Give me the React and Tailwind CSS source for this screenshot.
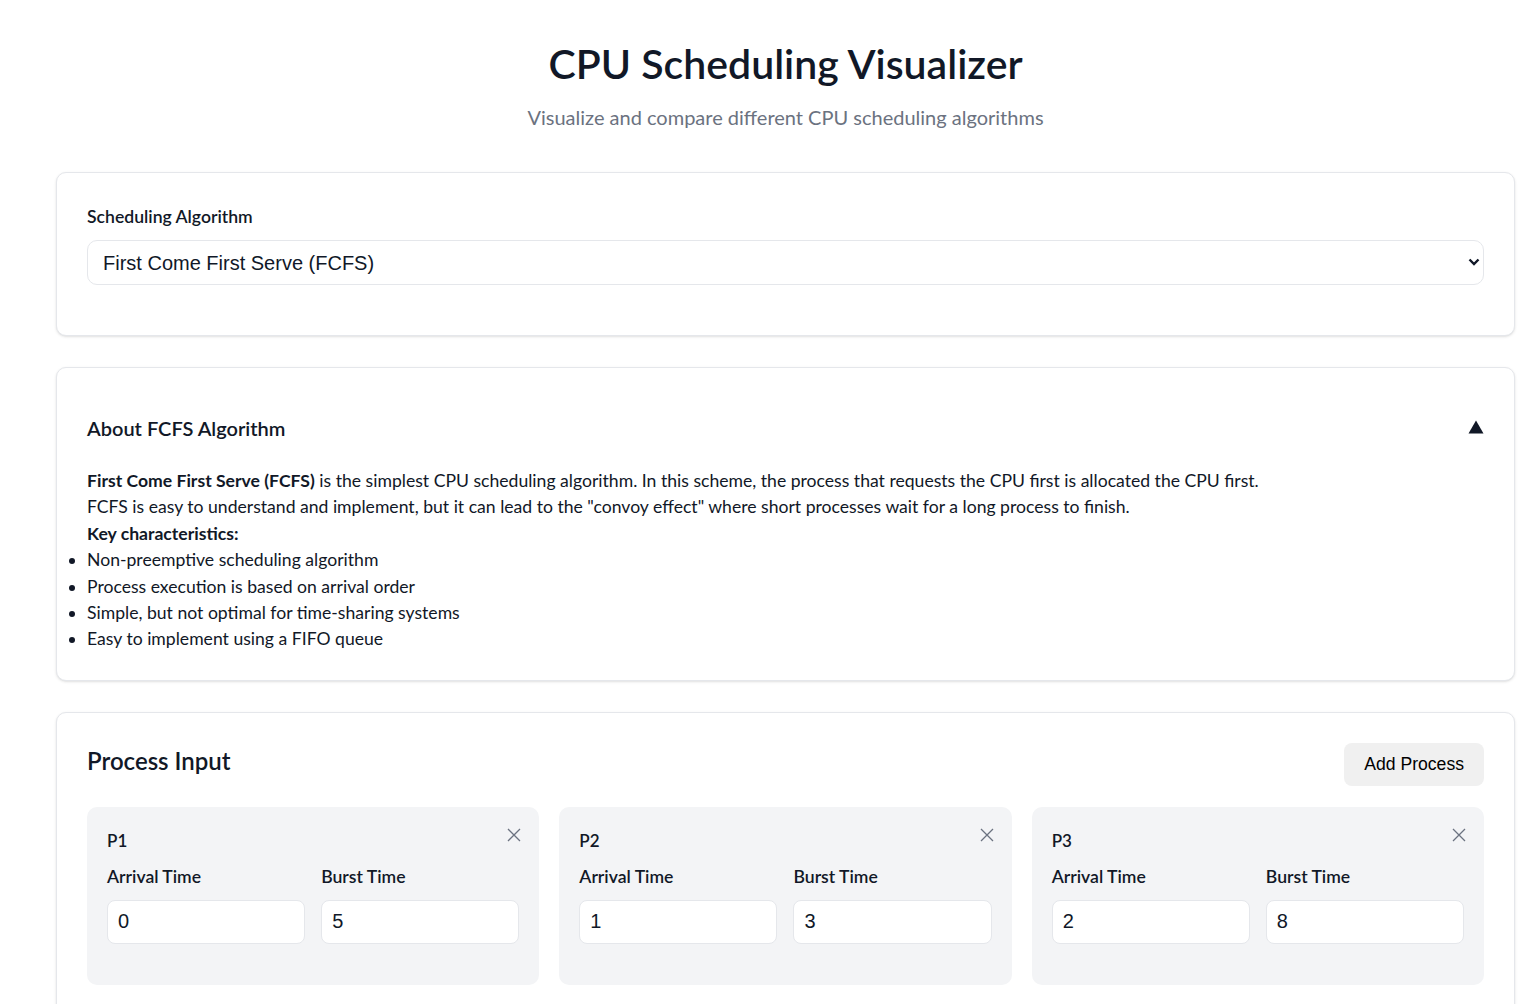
import { useState } from "react";

const ALGORITHMS = [
  { value: "fcfs", label: "First Come First Serve (FCFS)" },
  { value: "sjf", label: "Shortest Job First (SJF)" },
  { value: "srtf", label: "Shortest Remaining Time First (SRTF)" },
  { value: "rr", label: "Round Robin (RR)" },
  { value: "priority", label: "Priority Scheduling" },
];

const INITIAL = [
  { id: "P1", arrival: 0, burst: 5 },
  { id: "P2", arrival: 1, burst: 3 },
  { id: "P3", arrival: 2, burst: 8 },
];

function CloseIcon() {
  return (
    <svg width="14" height="14" viewBox="0 0 14 14" fill="none" stroke="#6b7280" strokeWidth="1.3">
      <path d="M1 1l12 12M13 1L1 13" />
    </svg>
  );
}

function ProcessCard({ process, onChange, onRemove }) {
  return (
    <div className="rounded-[10px] bg-[#f3f4f6] px-5 pt-[21px] pb-[41px]">
      <div className="flex items-start justify-between">
        <span className="text-[17px] font-semibold leading-[26px]">{process.id}</span>
        <button onClick={onRemove} className="mt-0 mr-[-2px] cursor-pointer">
          <CloseIcon />
        </button>
      </div>
      <div className="mt-[10px] grid grid-cols-2 gap-4">
        <label className="flex flex-col gap-[10px]">
          <span className="text-[17.6px] font-semibold leading-[26px]">Arrival Time</span>
          <input
            type="number"
            value={process.arrival}
            onChange={(e) => onChange({ arrival: e.target.value })}
            className="h-11 rounded-lg border border-[#e5e7eb] bg-white px-[10px] font-['Liberation_Sans',sans-serif] text-[20px] text-gray-900 outline-none [appearance:textfield]"
          />
        </label>
        <label className="flex flex-col gap-[10px]">
          <span className="text-[17.6px] font-semibold leading-[26px]">Burst Time</span>
          <input
            type="number"
            value={process.burst}
            onChange={(e) => onChange({ burst: e.target.value })}
            className="h-11 rounded-lg border border-[#e5e7eb] bg-white px-[10px] font-['Liberation_Sans',sans-serif] text-[20px] text-gray-900 outline-none [appearance:textfield]"
          />
        </label>
      </div>
    </div>
  );
}

export default function App() {
  const [algorithm, setAlgorithm] = useState("fcfs");
  const [open, setOpen] = useState(true);
  const [processes, setProcesses] = useState(INITIAL);

  function updateProcess(id, patch) {
    setProcesses((list) => list.map((p) => (p.id === id ? { ...p, ...patch } : p)));
  }

  function addProcess() {
    setProcesses((list) => [...list, { id: `P${list.length + 1}`, arrival: 0, burst: 1 }]);
  }

  return (
    <div className="min-h-screen bg-white font-['Lato',sans-serif] text-[#111827]">
      <div className="pl-14 pr-[22px]">
        <header className="pt-[38px] pb-[41px] text-center">
          <h1 className="text-[41px] font-semibold leading-[52px]">CPU Scheduling Visualizer</h1>
          <p className="mt-[13px] text-[20px] leading-7 text-[#6b7280]">
            Visualize and compare different CPU scheduling algorithms
          </p>
        </header>

        <section className="rounded-[10px] border border-[#e5e7eb] bg-white px-[30px] pt-8 pb-[50px] shadow-sm">
          <label className="block text-[17.6px] font-semibold leading-6">Scheduling Algorithm</label>
          <div className="relative mt-[11px]">
            <select
              value={algorithm}
              onChange={(e) => setAlgorithm(e.target.value)}
              className="h-[45px] w-full appearance-none rounded-[10px] border border-[#e5e7eb] bg-white px-[15px] font-['Liberation_Sans',sans-serif] text-[20px] text-gray-900 outline-none"
            >
              {ALGORITHMS.map((a) => (
                <option key={a.value} value={a.value}>{a.label}</option>
              ))}
            </select>
            <svg
              className="pointer-events-none absolute right-[4px] top-[18px]"
              width="12"
              height="8"
              viewBox="0 0 12 8"
              fill="none"
              stroke="#111827"
              strokeWidth="2.4"
            >
              <path d="M1.5 1.5l4.5 4.5 4.5-4.5" />
            </svg>
          </div>
        </section>

        <section className="mt-[31px] rounded-[10px] border border-[#e5e7eb] bg-white px-[30px] pt-[46px] pb-[27px] shadow-sm">
          <button
            onClick={() => setOpen((o) => !o)}
            className="flex w-full cursor-pointer items-center justify-between text-left"
          >
            <span className="text-[20px] font-semibold leading-7">About FCFS Algorithm</span>
            <svg width="16" height="14" viewBox="0 0 16 14" fill="#111827" className={open ? "-mt-[3px]" : "-mt-[3px] rotate-180"}>
              <path d="M8 0.5L15.5 13.5H0.5Z" />
            </svg>
          </button>
          {open && (
            <div className="mt-[26px] text-[17.6px] leading-[26.4px]">
              <p>
                <strong className="font-bold">First Come First Serve (FCFS)</strong> is the simplest CPU scheduling
                algorithm. In this scheme, the process that requests the CPU first is allocated the CPU first.
              </p>
              <p>
                FCFS is easy to understand and implement, but it can lead to the "convoy effect" where short processes
                wait for a long process to finish.
              </p>
              <p className="font-bold">Key characteristics:</p>
              <ul className="list-disc">
                <li>Non-preemptive scheduling algorithm</li>
                <li>Process execution is based on arrival order</li>
                <li>Simple, but not optimal for time-sharing systems</li>
                <li>Easy to implement using a FIFO queue</li>
              </ul>
            </div>
          )}
        </section>

        <section className="mt-[31px] rounded-[10px] border border-[#e5e7eb] bg-white px-[30px] pt-[30px] pb-8 shadow-sm">
          <div className="flex items-start justify-between">
            <h2 className="mt-[2px] text-[24px] font-semibold leading-8">Process Input</h2>
            <button
              onClick={addProcess}
              className="h-[43px] cursor-pointer rounded-lg bg-[#f0f0f0] px-5 font-['Liberation_Sans',sans-serif] text-[17.6px] text-black"
            >
              Add Process
            </button>
          </div>
          <div className="mt-[21px] grid grid-cols-3 gap-5">
            {processes.map((p) => (
              <ProcessCard
                key={p.id}
                process={p}
                onChange={(patch) => updateProcess(p.id, patch)}
                onRemove={() => setProcesses((list) => list.filter((x) => x.id !== p.id))}
              />
            ))}
          </div>
        </section>
      </div>
    </div>
  );
}
